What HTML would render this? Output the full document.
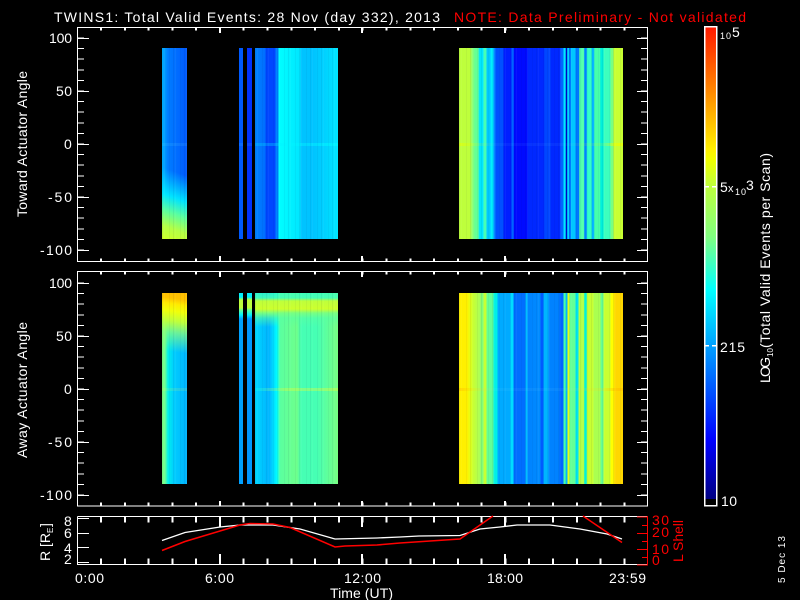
<!DOCTYPE html>
<html>
<head>
<meta charset="utf-8">
<style>
html,body{margin:0;padding:0;background:#000;}
#p{position:relative;width:800px;height:600px;background:#000;overflow:hidden;}
#p div{position:absolute;}
svg{position:absolute;left:0;top:0;}
text{font-family:"Liberation Sans",sans-serif;font-size:14px;fill:#fff;}
.r{fill:#f00;}
#p div.n{background:repeating-linear-gradient(to right,rgba(0,0,60,.06) 0 1px,transparent 1px 2px,rgba(255,255,255,.04) 2px 3px,transparent 3px 7px,rgba(0,0,60,.04) 7px 8px,transparent 8px 11px);}
</style>
</head>
<body>
<div id="p">
<!-- top panel -->
<div style="left:162px;top:48px;width:25px;height:191px;background:linear-gradient(to right,rgb(0,180,255) 0,rgb(0,125,255) 6px,rgb(0,110,255) 14px,rgb(0,90,255) 25px);"></div>
<div style="left:162px;top:160px;width:25px;height:79px;background:linear-gradient(200deg,rgba(0,255,255,0) 18%,rgba(0,240,255,.9) 48%,rgb(90,255,160) 66%,rgb(180,255,70) 84%,rgb(205,255,40) 100%);"></div>
<div style="left:239px;top:48px;width:4px;height:191px;background:rgb(0,90,255);"></div>
<div style="left:247px;top:48px;width:5px;height:191px;background:rgb(0,50,255);"></div>
<div style="left:255px;top:48px;width:83px;height:191px;background:linear-gradient(to right,rgb(0,130,255) 0,rgb(0,110,255) 10px,rgb(0,70,255) 11px,rgb(0,70,255) 20px,rgb(0,130,255) 21px,rgb(0,130,255) 23px,rgb(0,255,255) 24px,rgb(0,245,255) 32px,rgb(0,230,255) 45px,rgb(0,195,255) 46px,rgb(0,195,255) 58px,rgb(0,210,255) 70px,rgb(0,230,255) 83px);"></div>
<div style="left:459px;top:48px;width:164px;height:191px;background:linear-gradient(to right,rgb(190,255,60) 0,rgb(190,255,60) 11px,rgb(150,255,110) 13px,rgb(100,255,150) 16px,rgb(100,255,150) 19px,rgb(0,230,255) 20.5px,rgb(0,230,255) 24px,rgb(70,255,180) 25px,rgb(70,255,180) 27px,rgb(0,200,255) 28px,rgb(0,200,255) 31px,rgb(0,240,255) 32px,rgb(0,240,255) 34px,rgb(0,130,255) 35px,rgb(0,130,255) 36px,rgb(0,80,255) 37px,rgb(0,80,255) 44px,rgb(0,30,255) 45px,rgb(0,30,255) 52px,rgb(0,100,255) 53px,rgb(0,100,255) 54.5px,rgb(0,10,255) 55px,rgb(0,10,255) 68px,rgb(0,40,255) 69px,rgb(0,40,255) 85px,rgb(0,70,255) 85.5px,rgb(0,70,255) 91px,rgb(0,40,255) 92px,rgb(0,40,255) 101px,rgb(0,100,255) 102px,rgb(0,100,255) 104px,rgb(0,230,255) 105px,rgb(0,230,255) 106.5px,rgb(0,0,200) 107px,rgb(0,0,200) 108px,rgb(0,230,255) 108.5px,rgb(0,230,255) 109.5px,rgb(0,100,255) 110.5px,rgb(0,100,255) 111.5px,rgb(0,200,255) 112px,rgb(0,200,255) 116px,rgb(0,120,255) 117px,rgb(0,120,255) 120px,rgb(80,255,170) 120.5px,rgb(80,255,170) 125px,rgb(0,130,255) 125.5px,rgb(0,130,255) 127.5px,rgb(50,255,200) 128px,rgb(50,255,200) 132.5px,rgb(0,180,255) 133px,rgb(0,180,255) 135px,rgb(70,255,170) 135.5px,rgb(70,255,170) 141px,rgb(0,240,220) 141.5px,rgb(0,240,220) 144px,rgb(60,255,190) 145px,rgb(60,255,190) 151px,rgb(120,255,130) 152px,rgb(120,255,130) 154px,rgb(200,255,50) 155px,rgb(200,255,50) 164px);"></div>
<div style="left:162px;top:143px;width:25px;height:3px;background:rgba(120,255,255,.1);"></div>
<div style="left:239px;top:143px;width:4px;height:3px;background:rgba(120,255,255,.1);"></div>
<div style="left:247px;top:143px;width:5px;height:3px;background:rgba(120,255,255,.1);"></div>
<div style="left:255px;top:143px;width:83px;height:3px;background:linear-gradient(to right,rgba(0,230,255,.25),rgba(0,255,255,.5));"></div>
<div style="left:459px;top:143px;width:164px;height:3px;background:linear-gradient(to right,rgba(230,255,0,.6) 0,rgba(230,255,0,.2) 14px,rgba(100,200,255,.07) 35px,rgba(100,200,255,.07) 110px,rgba(230,255,0,.15) 145px,rgba(235,255,0,.7) 160px);"></div>

<!-- middle panel -->
<div style="left:162px;top:293px;width:25px;height:191px;background:linear-gradient(to right,rgb(125,255,130) 0,rgb(110,255,145) 3px,rgb(0,240,235) 6px,rgb(0,205,255) 12px,rgb(0,180,255) 25px);"></div>
<div style="left:162px;top:293px;width:25px;height:68px;background:linear-gradient(188deg,rgb(255,190,0) 0,rgb(255,195,0) 10%,rgb(255,235,0) 18%,rgb(240,255,10) 28%,rgb(190,255,60) 42%,rgba(140,255,120,.75) 58%,rgba(100,255,150,0) 85%);"></div>
<div style="left:239px;top:293px;width:4px;height:191px;background:linear-gradient(to bottom,rgb(0,240,255) 0,rgb(0,240,255) 4px,rgb(190,255,60) 7px,rgb(190,255,60) 15px,rgb(100,255,150) 17px,rgb(0,240,255) 22px,rgb(0,160,255) 26px,rgb(0,160,255) 191px);"></div>
<div style="left:247px;top:293px;width:5px;height:191px;background:linear-gradient(to bottom,rgb(0,240,255) 0,rgb(0,240,255) 4px,rgb(190,255,60) 7px,rgb(190,255,60) 15px,rgb(100,255,150) 17px,rgb(0,240,255) 22px,rgb(0,150,255) 26px,rgb(0,150,255) 191px);"></div>
<div style="left:255px;top:293px;width:83px;height:191px;background:linear-gradient(to right,rgb(0,215,255) 0,rgb(0,190,255) 10px,rgb(0,180,255) 14px,rgb(0,225,255) 19px,rgb(0,255,255) 22px,rgb(90,255,160) 25px,rgb(110,255,140) 42px,rgb(70,255,180) 46px,rgb(70,255,180) 62px,rgb(120,255,130) 83px);"></div>
<div style="left:255px;top:293px;width:83px;height:34px;background:linear-gradient(to bottom,rgba(60,255,190,.75) 0,rgba(70,255,180,.9) 5px,rgb(190,255,60) 8px,rgb(205,255,45) 16px,rgb(120,255,130) 20px,rgba(90,255,160,.6) 25px,rgba(90,255,160,0) 34px);"></div>
<div style="left:459px;top:293px;width:164px;height:191px;background:linear-gradient(to right,rgb(255,240,0) 0,rgb(255,240,0) 8px,rgb(230,255,20) 11px,rgb(200,255,50) 14px,rgb(170,255,90) 21px,rgb(130,255,120) 22px,rgb(130,255,120) 24px,rgb(200,255,50) 25px,rgb(200,255,50) 27px,rgb(100,255,150) 28px,rgb(100,255,150) 34px,rgb(0,240,230) 35px,rgb(0,240,230) 38px,rgb(0,170,255) 39px,rgb(0,170,255) 51px,rgb(0,220,255) 52px,rgb(0,220,255) 54px,rgb(0,110,255) 55px,rgb(0,110,255) 66px,rgb(0,190,255) 67px,rgb(0,190,255) 68px,rgb(0,130,255) 69px,rgb(0,140,255) 81px,rgb(0,90,255) 82px,rgb(0,90,255) 84px,rgb(0,180,255) 85px,rgb(0,180,255) 89px,rgb(0,130,255) 90px,rgb(0,130,255) 100px,rgb(0,100,255) 101px,rgb(0,100,255) 104px,rgb(70,255,170) 105px,rgb(70,255,170) 106.5px,rgb(0,180,255) 107px,rgb(0,180,255) 108px,rgb(230,255,20) 109px,rgb(230,255,20) 110px,rgb(100,255,150) 111px,rgb(100,255,150) 116px,rgb(0,230,240) 117px,rgb(0,230,240) 119px,rgb(180,255,70) 120px,rgb(180,255,70) 125px,rgb(0,240,220) 125.5px,rgb(0,240,220) 127.5px,rgb(200,255,50) 128px,rgb(200,255,50) 134px,rgb(170,255,80) 135px,rgb(170,255,80) 141px,rgb(100,255,150) 142px,rgb(100,255,150) 144px,rgb(200,255,50) 145px,rgb(200,255,50) 151px,rgb(255,255,0) 152px,rgb(255,255,0) 154px,rgb(255,215,0) 156px,rgb(255,215,0) 164px);"></div>
<div style="left:162px;top:388px;width:25px;height:3px;background:rgba(230,255,80,.15);"></div>
<div style="left:255px;top:388px;width:83px;height:3px;background:linear-gradient(to right,rgba(0,255,255,.3),rgba(230,255,50,.35) 30px,rgba(230,255,50,.4));"></div>
<div style="left:459px;top:388px;width:164px;height:3px;background:linear-gradient(to right,rgba(255,200,0,.6) 0,rgba(255,220,0,.2) 14px,rgba(120,220,255,.08) 35px,rgba(120,220,255,.08) 110px,rgba(255,220,0,.2) 145px,rgba(255,190,0,.6) 160px);"></div>

<!-- fine vertical texture -->
<div class="n" style="left:162px;top:48px;width:25px;height:191px;"></div>
<div class="n" style="left:255px;top:48px;width:83px;height:191px;"></div>
<div class="n" style="left:459px;top:48px;width:164px;height:191px;"></div>
<div class="n" style="left:162px;top:293px;width:25px;height:191px;"></div>
<div class="n" style="left:255px;top:293px;width:83px;height:191px;"></div>
<div class="n" style="left:459px;top:293px;width:164px;height:191px;"></div>

<!-- colour bar -->
<div style="left:705px;top:27px;width:11px;height:478px;background:linear-gradient(to bottom,rgb(255,25,0) 0,rgb(255,125,0) 58px,rgb(255,240,0) 123px,rgb(240,255,0) 133px,rgb(190,255,60) 159px,rgb(128,255,128) 210px,rgb(0,255,255) 263px,rgb(0,128,255) 338px,rgb(0,0,255) 413px,rgb(0,0,130) 472px,#000 472px);"></div>

<svg width="800" height="600" viewBox="0 0 800 600">
<g fill="none" stroke="#fff" shape-rendering="crispEdges">
<rect x="77.5" y="27.5" width="570" height="234"/>
<rect x="77.5" y="271.5" width="570" height="234.5"/>
<path d="M77.5 516.5H648M77.5 516.5V564.5H648"/>
<rect x="704.5" y="26.5" width="12" height="479" stroke-width="1.5"/>
<g stroke-width="2" stroke-dasharray="2 21.79">
<line x1="100" y1="29" x2="648" y2="29" stroke-width="3"/>
<line x1="100" y1="260" x2="648" y2="260" stroke-width="3"/>
<line x1="100" y1="273" x2="648" y2="273" stroke-width="3"/>
<line x1="100" y1="504" x2="648" y2="504" stroke-width="3"/>
<line x1="100" y1="519.5" x2="648" y2="519.5" stroke-width="6"/>
<line x1="100" y1="561.5" x2="648" y2="561.5" stroke-width="6"/>
</g>
<path stroke-width="2" d="M220 27v6M362 27v6M505 27v6M220 256v6M362 256v6M505 256v6M220 271v6M362 271v6M505 271v6M220 501v5M362 501v5M505 501v5M220 516v11M362 516v11M505 516v11M220 554v10M362 554v10M505 554v10"/>
<g stroke-dasharray="1 9.6">
<line x1="80.5" y1="37.5" x2="80.5" y2="251" stroke-width="7"/>
<line x1="644.5" y1="37.5" x2="644.5" y2="251" stroke-width="7"/>
<line x1="80.5" y1="282.5" x2="80.5" y2="496" stroke-width="7"/>
<line x1="644.5" y1="282.5" x2="644.5" y2="496" stroke-width="7"/>
</g>
<path d="M77 38.500h12M77 91.500h12M77 144.500h12M77 197.500h12M77 250.500h12M637 38.500h11M637 91.500h11M637 144.500h11M637 197.500h11M637 250.500h11M77 283.500h12M77 336.500h12M77 389.500h12M77 442.500h12M77 495.500h12M637 283.500h11M637 336.500h11M637 389.500h11M637 442.500h11M637 495.500h11M77 518.500h12M77 533.500h12M77 547.500h12M77 562.500h12"/>
<path stroke="#fff" stroke-width="1.500" d="M705 186.500h4M712 186.500h4M705 345.500h4M712 345.500h4"/>
<path stroke="#f00" d="M647.500 516V565.500M637 517h11M637 533.500h11M637 549.500h11M637 565h11M642 525.500h6M642 541.500h6M642 557.500h6"/>
</g>
<polyline fill="none" stroke="#fff" stroke-width="1.300" points="162,540.500 185,532.500 220,527 240,525 273,525 300,529 335,539 377,538 400,537 419,536 460,535.500 480,529 500,527 517,525 550,525 580,529 607,534 622,539"/>
<polyline fill="none" stroke="#f00" stroke-width="1.500" points="162,550.500 185,541.500 240,525 250,523.500 273,524 290,527.500 335,547 345,546 377,545 400,543 460,539 493,516"/>
<polyline fill="none" stroke="#f00" stroke-width="1.500" points="583,516 622,542.500"/>

<text x="54" y="22" textLength="386">TWINS1: Total Valid Events: 28 Nov (day 332), 2013</text>
<text class="r" x="454" y="22" textLength="292">NOTE: Data Preliminary - Not validated</text>

<text x="49" y="43" textLength="23">100</text>
<text x="56" y="96" textLength="16">50</text>
<text x="64" y="149" textLength="8">0</text>
<text x="48" y="202" textLength="24">-50</text>
<text x="40" y="255" textLength="32">-100</text>
<text x="49" y="288" textLength="23">100</text>
<text x="56" y="341" textLength="16">50</text>
<text x="64" y="394" textLength="8">0</text>
<text x="48" y="447" textLength="24">-50</text>
<text x="40" y="500" textLength="32">-100</text>
<text transform="translate(27 217) rotate(-90)" textLength="146">Toward Actuator Angle</text>
<text transform="translate(27 458) rotate(-90)" textLength="136">Away Actuator Angle</text>
<text transform="translate(50 561) rotate(-90)" textLength="28">R [R</text>
<text transform="translate(53 533) rotate(-90)" style="font-size:8px" textLength="5">E</text>
<text transform="translate(50 527) rotate(-90)">]</text>
<text x="64" y="526" textLength="9">8</text>
<text x="64" y="538" textLength="9">6</text>
<text x="64" y="553" textLength="9">4</text>
<text x="64" y="564" textLength="9">2</text>
<text class="r" x="652" y="525" textLength="17">30</text>
<text class="r" x="652" y="537" textLength="17">20</text>
<text class="r" x="652" y="554" textLength="17">10</text>
<text class="r" x="652" y="565" textLength="9">0</text>
<text class="r" transform="translate(683 562) rotate(-90)" textLength="42">L Shell</text>
<text x="75" y="583" textLength="29">0:00</text>
<text x="205" y="583" textLength="29">6:00</text>
<text x="344" y="583" textLength="37">12:00</text>
<text x="487" y="583" textLength="36">18:00</text>
<text x="609" y="583" textLength="37">23:59</text>
<text x="330" y="598" textLength="63">Time (UT)</text>
<text x="720" y="39" style="font-size:9px" textLength="11">10</text>
<text x="732" y="37" textLength="8">5</text>
<text x="720" y="192" textLength="8">5</text>
<text x="728" y="192" style="font-size:11px" textLength="7">x</text>
<text x="735" y="195" style="font-size:9px" textLength="11">10</text>
<text x="746" y="190" textLength="8">3</text>
<text x="720" y="352" textLength="25">215</text>
<text x="721" y="506" textLength="16">10</text>
<text transform="translate(770 383) rotate(-90)" textLength="26">LOG</text>
<text transform="translate(773 357) rotate(-90)" style="font-size:8px" textLength="9">10</text>
<text transform="translate(770 348) rotate(-90)" textLength="195">(Total Valid Events per Scan)</text>
<text transform="translate(785 583) rotate(-90)" style="font-size:10px" textLength="47">5 Dec 13</text>
</svg>
</div>
</body>
</html>
